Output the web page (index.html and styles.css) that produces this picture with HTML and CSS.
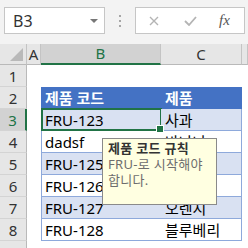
FILE: index.html
```html
<!doctype html>
<html>
    <head>
        <meta charset="utf-8">
        <title>제품 코드 규칙</title>
        <link rel="stylesheet" href="styles.css">
    </head>
    <body>
        <div class="formula-bar">
            <div class="name-box">
                <span>B3</span>
                <i class="caret"></i>
            </div>
            <div class="grip"><b></b><b></b><b></b></div>
            <div class="formula-box">
                <svg class="btn-cancel" width="10" height="10" viewBox="0 0 10 10">
                    <path d="M1 1 L9 9 M9 1 L1 9" stroke="#b4b4b4" stroke-width="1.4" fill="none"/>
                </svg>
                <svg class="btn-enter" width="13" height="10" viewBox="0 0 13 10">
                    <path d="M1 5 L5 9 L12 1" stroke="#b4b4b4" stroke-width="1.8" fill="none"/>
                </svg>
                <span class="fx">fx</span>
            </div>
        </div>

        <div class="sheet">
            <div class="row heads">
                <div class="corner"><i></i></div>
                <div class="col-head">A</div>
                <div class="col-head selected">B</div>
                <div class="col-head">C</div>
                <div class="col-head"></div>
            </div>
            <div class="row">
                <div class="row-head">1</div>
                <div></div><div></div><div></div><div></div>
            </div>
            <div class="row">
                <div class="row-head">2</div>
                <div></div>
                <div class="cell th first">제품 코드</div>
                <div class="cell th last">제품</div>
                <div></div>
            </div>
            <div class="row">
                <div class="row-head selected">3</div>
                <div></div>
                <div class="cell band first active">FRU-123</div>
                <div class="cell band last">사과</div>
                <div></div>
            </div>
            <div class="row">
                <div class="row-head">4</div>
                <div></div>
                <div class="cell first">dadsf</div>
                <div class="cell last">바나나</div>
                <div></div>
            </div>
            <div class="row">
                <div class="row-head">5</div>
                <div></div>
                <div class="cell band first">FRU-125</div>
                <div class="cell band last">포도</div>
                <div></div>
            </div>
            <div class="row">
                <div class="row-head">6</div>
                <div></div>
                <div class="cell first">FRU-126</div>
                <div class="cell last">수박</div>
                <div></div>
            </div>
            <div class="row">
                <div class="row-head">7</div>
                <div></div>
                <div class="cell band first">FRU-127</div>
                <div class="cell band last">오렌지</div>
                <div></div>
            </div>
            <div class="row">
                <div class="row-head">8</div>
                <div></div>
                <div class="cell first">FRU-128</div>
                <div class="cell last">블루베리</div>
                <div></div>
            </div>
            <div class="row">
                <div class="row-head"></div>
                <div></div><div></div><div></div><div></div>
            </div>

            <div class="input-tip">
                <div class="tip-title">제품 코드 규칙</div>
                <div class="tip-body">FRU-로 시작해야<br>합니다.</div>
            </div>
        </div>
    </body>
</html>
```

FILE: styles.css
```css
:root {
    --bar-bg: #f3f3f3;
    --head-bg: #e6e6e6;
    --head-sel-bg: #d2d2d2;
    --head-line: #c4c4c4;
    --excel-green: #217346;
    --table-blue: #4472c4;
    --table-line: #8ea9db;
    --table-band: #d9e1f2;
    --tip-bg: #ffffe1;

    --row-height: 22px;
    --cols: 27px 14px 120px 81px 1fr;
}

* {
    box-sizing: border-box;
}

body {
    margin: 0;
    width: 248px;
    height: 248px;
    overflow: hidden;
    background: white;
    font-family: 'Noto Sans', 'Noto Sans CJK KR', sans-serif;
    color: #000;
}

/* formula bar */

.formula-bar {
    height: 44px;
    background: var(--bar-bg);
    display: flex;
    align-items: flex-start;
    padding: 7px 3px 0 4px;
}

.name-box {
    width: 101px;
    height: 27px;
    background: white;
    border: 1px solid #c6c6c6;
    display: flex;
    align-items: center;
    padding: 0 6px 0 8px;
    font-size: 16px;
    color: #333;
}

.name-box span {
    flex: 1;
}

.caret {
    width: 0;
    height: 0;
    border-left: 4px solid transparent;
    border-right: 4px solid transparent;
    border-top: 4px solid #777;
}

.grip {
    margin-left: 14px;
    margin-top: 8px;
    display: flex;
    flex-direction: column;
    gap: 3px;
}

.grip b {
    display: block;
    width: 2px;
    height: 2px;
    background: #a6a6a6;
}

.formula-box {
    flex: 1;
    margin-left: 14px;
    height: 27px;
    background: white;
    border: 1px solid #c6c6c6;
    display: flex;
    align-items: center;
    padding-left: 13px;
}

.btn-enter {
    margin-left: 25px;
}

.fx {
    margin-left: 22px;
    font-family: 'Liberation Serif', serif;
    font-style: italic;
    font-size: 15px;
    color: #555;
}

/* sheet */

.sheet {
    position: relative;
    font-size: 15px;
}

.row {
    display: grid;
    grid-template-columns: var(--cols);
    height: var(--row-height);
}

.row.heads {
    height: 21px;
}

.corner,
.col-head {
    background: var(--head-bg);
    border-right: 1px solid var(--head-line);
    border-bottom: 1px solid #b9b9b9;
    color: #333;
    display: flex;
    align-items: center;
    justify-content: center;
    line-height: 1;
}

.corner {
    position: relative;
}

.corner i {
    position: absolute;
    right: 3px;
    bottom: 3px;
    width: 0;
    height: 0;
    border-left: 13px solid transparent;
    border-bottom: 13px solid #b9b9b9;
}

.col-head.selected {
    background: var(--head-sel-bg);
    border-bottom: 2px solid var(--excel-green);
    color: var(--excel-green);
}

.row-head {
    background: var(--head-bg);
    border-right: 1px solid #b9b9b9;
    border-bottom: 1px solid #d4d4d4;
    color: #333;
    display: flex;
    align-items: center;
    justify-content: center;
}

.row-head.selected {
    background: var(--head-sel-bg);
    border-right: 2px solid var(--excel-green);
    color: var(--excel-green);
}

/* table */

.cell {
    display: flex;
    align-items: center;
    padding-left: 3px;
    white-space: nowrap;
    border-bottom: 1px solid var(--table-line);
    position: relative;
}

.cell.first {
    border-left: 1px solid var(--table-line);
}

.cell.last {
    border-right: 1px solid var(--table-line);
    padding-left: 4px;
}

.cell.th {
    background: var(--table-blue);
    color: white;
    font-weight: 700;
    border-color: var(--table-blue);
}

.cell.band {
    background: var(--table-band);
}

.cell.active::after {
    content: "";
    position: absolute;
    left: -1px;
    top: -1px;
    right: -1px;
    bottom: -1px;
    border: 2px solid var(--excel-green);
}

.cell.active::before {
    content: "";
    position: absolute;
    right: -3px;
    bottom: -3px;
    width: 6px;
    height: 6px;
    background: var(--excel-green);
    border: 1px solid white;
    z-index: 1;
}

/* data validation input message */

.input-tip {
    position: absolute;
    left: 102px;
    top: 94px;
    width: 115px;
    height: 67px;
    background: var(--tip-bg);
    border: 1px solid #8a8a8a;
    padding: 1px 5px;
    font-size: 13px;
    line-height: 16px;
    letter-spacing: 0.3px;
    white-space: nowrap;
}

.tip-title {
    font-weight: 700;
    color: #333;
}

.tip-body {
    color: #6d6d6d;
}
```
